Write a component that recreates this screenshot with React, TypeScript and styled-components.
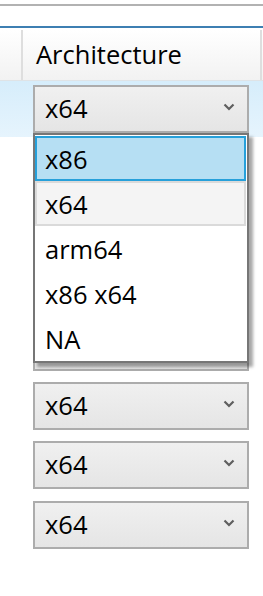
import React from 'react';
import styled, { createGlobalStyle } from 'styled-components';

const GlobalStyle = createGlobalStyle`
	body {
		margin: 0;
		background: #fff;
		font-family: 'Open Sans', 'Noto Sans', 'Liberation Sans', sans-serif;
		color: #000;
	}
`;

const Page = styled.div`
	position: relative;
	width: 263px;
	height: 596px;
	overflow: hidden;
	background: #fff;
`;

const TopStrip = styled.div`
	margin-top: 4px;
	height: 20px;
	border-top: 2px solid #b2b2b2;
	border-bottom: 2px solid #3d7fb2;
	background: #fff;
`;

const Header = styled.div`
	margin-top: 2px;
	height: 50px;
	display: flex;
	border-bottom: 1px solid #dfe3e6;
	background: linear-gradient(#ffffff, #f2f2f2);
`;

const HeaderCell = styled.div<{ w?: number }>`
	width: ${(p) => (p.w ? `${p.w}px` : 'auto')};
	flex: ${(p) => (p.w ? 'none' : '1')};
	border-right: 2px solid #dedede;
	display: flex;
	align-items: center;
	padding-left: ${(p) => (p.w && p.w > 100 ? '13px' : '0')};
	box-sizing: border-box;
	font-size: 25.5px;
	padding-bottom: 2px;
	&:last-child {
		border-right: none;
	}
`;

const Rows = styled.div`
	display: flex;
	flex-direction: column;
`;

const Row = styled.div<{ selected?: boolean }>`
	height: 59.4px;
	flex: none;
	padding: 4px 0 0 33px;
	box-sizing: border-box;
	background: ${(p) =>
		p.selected ? 'linear-gradient(#d6edfb, #e6f4fd) no-repeat 0 0 / 100% 56px' : '#fff'};
`;

const Combo = styled.div`
	width: 216px;
	height: 48px;
	box-sizing: border-box;
	border: 2px solid #acacac;
	background: linear-gradient(#f0f0f0, #e5e5e5);
	display: flex;
	align-items: center;
	justify-content: space-between;
	padding: 0 12px 2px 10px;
	font-size: 25.5px;
	svg {
		margin-top: -2px;
	}
`;

const Popup = styled.div`
	position: absolute;
	top: 133px;
	left: 33px;
	width: 216px;
	box-sizing: border-box;
	border: 2px solid #767676;
	background: #fff;
	padding: 1px 0 0 0;
	box-shadow: 4px 4px 3px rgba(0, 0, 0, 0.35);
`;

const Item = styled.div<{ state?: 'selected' | 'hover' }>`
	height: 45px;
	box-sizing: border-box;
	border: 2px solid
		${(p) => (p.state === 'selected' ? '#26a0da' : p.state === 'hover' ? '#dadada' : 'transparent')};
	background: ${(p) => (p.state === 'selected' ? '#b6dff3' : p.state === 'hover' ? '#f4f4f4' : '#fff')};
	display: flex;
	align-items: center;
	padding: 0 0 0 8px;
	font-size: 25.5px;
	margin-right: 1px;
`;

const Chevron = () => (
	<svg width="12" height="8" viewBox="0 0 12 8">
		<path d="M1.5 1.5 L6 6 L10.5 1.5" fill="none" stroke="#5f5f5f" strokeWidth="2.2" />
	</svg>
);

const options: { label: string; state?: 'selected' | 'hover' }[] = [
	{ label: 'x86', state: 'selected' },
	{ label: 'x64', state: 'hover' },
	{ label: 'arm64' },
	{ label: 'x86 x64' },
	{ label: 'NA' },
];

// rows 1..4 sit fully under the open dropdown, row 4 only peeks out below it
const coveredRows = [1, 2, 3, 4];

export default function App() {
	const rows = Array.from({ length: 8 });
	return (
		<Page>
			<GlobalStyle />
			<TopStrip />
			<Header>
				<HeaderCell w={23} />
				<HeaderCell w={239}>Architecture</HeaderCell>
				<HeaderCell />
			</Header>
			<Rows>
				{rows.map((_, i) => {
					const covered = coveredRows.includes(i);
					return (
						<Row key={i} selected={i === 0}>
							<Combo>
								<span>{covered ? '' : 'x64'}</span>
								{!covered && <Chevron />}
							</Combo>
						</Row>
					);
				})}
			</Rows>
			<Popup>
				{options.map((o) => (
					<Item key={o.label} state={o.state}>
						{o.label}
					</Item>
				))}
			</Popup>
		</Page>
	);
}
